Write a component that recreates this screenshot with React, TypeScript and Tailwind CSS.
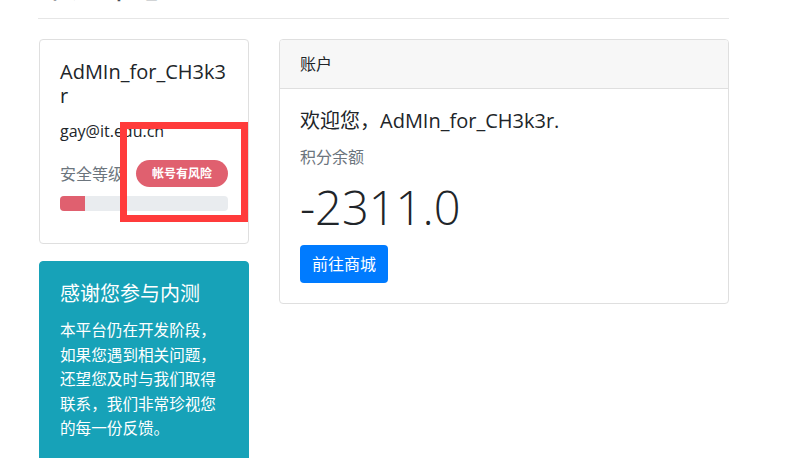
import React from 'react';

const font = { fontFamily: '"Open Sans", "Noto Sans CJK SC", sans-serif' };

export default function App() {
    return (
        <div className="w-[804px] h-[458px] overflow-hidden bg-white text-[#212529] relative" style={font}>
            <div className="ml-[39px] w-[690px]">
                {/* Page title, scrolled mostly out of view */}
                <h2 className="-mt-[34px] text-[32px] leading-[40px] text-[#495057]">个人中心</h2>
                <hr className="mt-[12px] border-t border-[#e6e6e6] -ml-[1px]" />

                <div className="flex gap-[30px] mt-[20px]">
                    {/* Left column */}
                    <div className="w-[210px] shrink-0 flex flex-col gap-[17px]">
                        <div className="border border-[#dfdfdf] rounded-[4px] p-[20px] pb-[32px]">
                            <h5 className="text-[20px] leading-[24px] break-all mb-[11px]">AdMIn_for_CH3k3r</h5>
                            <p className="text-[16px] leading-[24px]">gay@it.edu.cn</p>
                            <div className="flex items-center mt-[17px]">
                                <span className="text-[16px] leading-[24px] text-[#6c757d] whitespace-nowrap shrink-0">安全等级</span>
                                <span className="ml-[12px] h-[27px] w-[92px] shrink-0 rounded-full bg-[#e0606f] text-white text-[12px] font-bold flex items-center justify-center">帐号有风险</span>
                            </div>
                            <div className="mt-[9px] h-[15px] rounded-[4px] bg-[#e9ecef] overflow-hidden">
                                <div className="h-full w-[25px] bg-[#e0606f]" />
                            </div>
                        </div>

                        <div className="bg-[#17a2b8] border border-[#17a2b8] rounded-[4px] p-[20px] text-white h-[260px]">
                            <h5 className="text-[20px] leading-[24px] mb-[12px]">感谢您参与内测</h5>
                            <p className="text-[15.6px] leading-[24.5px]">本平台仍在开发阶段，如果您遇到相关问题，还望您及时与我们取得联系，我们非常珍视您的每一份反馈。</p>
                        </div>
                    </div>

                    {/* Right column */}
                    <div className="w-[450px] shrink-0 self-start border border-[#dfdfdf] rounded-[4px] overflow-hidden">
                        <div className="bg-[#f7f7f7] border-b border-[#dfdfdf] px-[20px] py-[12px] text-[16px] leading-[24px]">账户</div>
                        <div className="p-[20px]">
                            <h5 className="text-[20px] leading-[24px] mb-[12px]">欢迎您，AdMIn_for_CH3k3r.</h5>
                            <p className="text-[16px] leading-[24px] text-[#6c757d]">积分余额</p>
                            <p className="text-[47px] leading-[56px] font-light mt-[10px] mb-[10px]">-2311.0</p>
                            <button className="bg-[#007bff] text-white text-[16px] leading-[24px] px-[12px] py-[7px] rounded-[4px]">前往商城</button>
                        </div>
                    </div>
                </div>
            </div>

            {/* Annotation box */}
            <div className="absolute left-[120px] top-[122px] w-[128px] h-[100px] border-[7px] border-[#ff3b3b]" />
        </div>
    );
}
